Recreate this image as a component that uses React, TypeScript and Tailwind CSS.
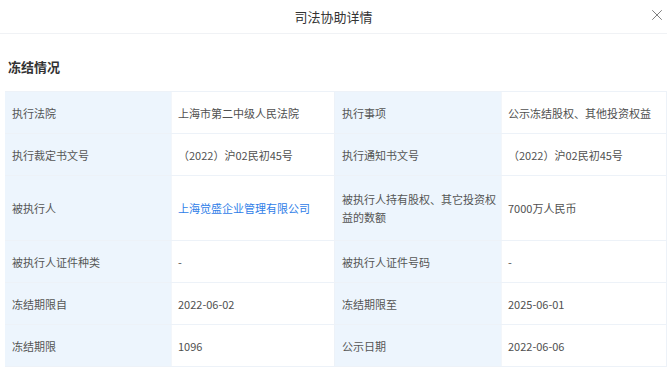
import * as React from "react"
import { X } from "lucide-react"

type Cell = { label: React.ReactNode; value: React.ReactNode; link?: boolean }

const rows: { cells: [Cell, Cell]; tall?: boolean }[] = [
  {
    cells: [
      { label: "执行法院", value: "上海市第二中级人民法院" },
      { label: "执行事项", value: "公示冻结股权、其他投资权益" },
    ],
  },
  {
    cells: [
      { label: "执行裁定书文号", value: "（2022）沪02民初45号" },
      { label: "执行通知书文号", value: "（2022）沪02民初45号" },
    ],
  },
  {
    tall: true,
    cells: [
      { label: "被执行人", value: "上海觉盛企业管理有限公司", link: true },
      {
        label: (
          <>
            被执行人持有股权、其它投资权
            <br />
            益的数额
          </>
        ),
        value: "7000万人民币",
      },
    ],
  },
  {
    cells: [
      { label: "被执行人证件种类", value: "-" },
      { label: "被执行人证件号码", value: "-" },
    ],
  },
  {
    cells: [
      { label: "冻结期限自", value: "2022-06-02" },
      { label: "冻结期限至", value: "2025-06-01" },
    ],
  },
  {
    cells: [
      { label: "冻结期限", value: "1096" },
      { label: "公示日期", value: "2022-06-06" },
    ],
  },
]

export default function App() {
  return (
    <div
      className="h-[380px] w-[667px] overflow-hidden bg-white text-[#444]"
      style={{ fontFamily: '"Noto Sans CJK SC", "Noto Sans", sans-serif' }}
    >
      {/* Dialog header */}
      <div className="relative flex h-[34px] items-center justify-center border-b border-[#f0f2f5]">
        <span className="text-[13px] text-[#333]">司法协助详情</span>
        <X className="absolute right-[1px] top-[6px] h-[18px] w-[18px] text-[#555]" strokeWidth={1} />
      </div>

      <div className="pl-[5px]">
        <h2 className="pb-[15px] pl-[3px] pt-[24px] text-[13px] font-bold leading-[18px] text-[#333]">
          冻结情况
        </h2>

        <div className="border-t border-[#edf2f8]">
          {rows.map((row, i) => (
            <div
              key={i}
              className={
                "grid grid-cols-[167px_163px_167px_165px] border-b border-[#edf2f8] " +
                (row.tall ? "h-[65px]" : "h-[42px]")
              }
            >
              {row.cells.map((c, j) => (
                <React.Fragment key={j}>
                  <div className="flex items-center border-r border-[#f3f6fa] bg-[#edf5fd] pl-[7px] text-[11px] leading-[18px] text-[#555]">
                    <span>{c.label}</span>
                  </div>
                  <div
                    className={
                      "flex items-center border-r border-[#edf2f8] pl-[6px] text-[11px] leading-[18px] " +
                      (c.link ? "text-[#2f80e8]" : "text-[#505050]")
                    }
                  >
                    {c.value}
                  </div>
                </React.Fragment>
              ))}
            </div>
          ))}
        </div>
      </div>
    </div>
  )
}
